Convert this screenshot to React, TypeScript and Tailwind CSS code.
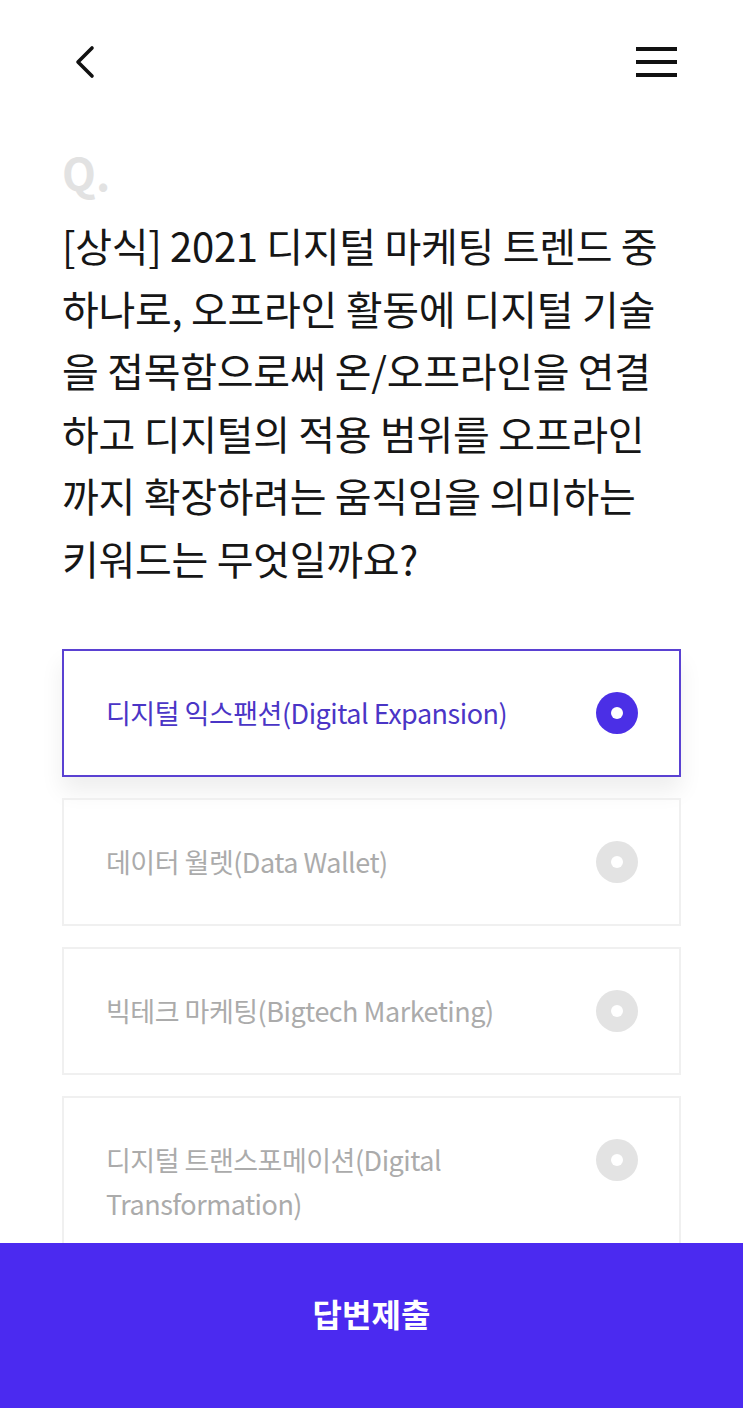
import { useState } from "react";

const font = {
  fontFamily: '"Noto Sans CJK KR", "Noto Sans", sans-serif',
};

const options = [
  { id: 1, label: ["디지털 익스팬션(Digital Expansion)"] },
  { id: 2, label: ["데이터 월렛(Data Wallet)"] },
  { id: 3, label: ["빅테크 마케팅(Bigtech Marketing)"] },
  { id: 4, label: ["디지털 트랜스포메이션(Digital", "Transformation)"] },
];

const question = [
  "[상식] 2021 디지털 마케팅 트렌드 중",
  "하나로, 오프라인 활동에 디지털 기술",
  "을 접목함으로써 온/오프라인을 연결",
  "하고 디지털의 적용 범위를 오프라인",
  "까지 확장하려는 움직임을 의미하는",
  "키워드는 무엇일까요?",
];

function Radio({ on }: { on: boolean }) {
  return (
    <div
      className={`flex h-[42px] w-[42px] shrink-0 items-center justify-center rounded-full ${
        on ? "bg-[#4b2fe6]" : "bg-[#e3e3e3]"
      }`}
    >
      <div className="h-[12px] w-[12px] rounded-full bg-white" />
    </div>
  );
}

export default function App() {
  const [picked, setPicked] = useState(1);

  return (
    <div className="relative h-[1408px] overflow-hidden bg-white" style={font}>
      {/* top bar */}
      <header className="flex h-[64px] items-center justify-between px-[62px] mt-[30px]">
        <svg width="26" height="34" viewBox="0 0 26 34" className="ml-[10px]" fill="none">
          <path d="M20 3 L6 17 L20 31" stroke="#111" strokeWidth="3.6" strokeLinecap="round" strokeLinejoin="round" />
        </svg>
        <div className="mr-[4px] flex w-[41px] flex-col gap-[9.5px]">
          <span className="block h-[3.5px] bg-[#111]" />
          <span className="block h-[3.5px] bg-[#111]" />
          <span className="block h-[3.5px] bg-[#111]" />
        </div>
      </header>

      <main className="px-[62px]">
        <div className="mt-[54px] text-[44px] font-bold leading-[48px] text-[#e2e2e2]">Q.</div>

        <h1 className="mt-[18px] whitespace-nowrap text-[40px] font-normal leading-[62.5px] tracking-[-0.3px] text-[#161616]">
          {question.map((l) => (
            <div key={l}>{l}</div>
          ))}
        </h1>

        <ul className="mt-[60px] flex flex-col gap-[21px]">
          {options.map((o) => {
            const on = picked === o.id;
            return (
              <li
                key={o.id}
                onClick={() => setPicked(o.id)}
                className={`flex items-start justify-between border-2 py-[40px] pl-[42px] pr-[41px] ${
                  on
                    ? "border-[#5a41d2] shadow-[0_14px_22px_rgba(0,0,0,0.07)]"
                    : "border-[#f0f0f0]"
                }`}
              >
                <div
                  className={`text-[27px] leading-[44px] tracking-[-0.5px] ${
                    on ? "text-[#4a35c6]" : "text-[#ababab]"
                  }`}
                >
                  {o.label.map((t) => (
                    <div key={t}>{t}</div>
                  ))}
                </div>
                <div className="mt-[1px]">
                  <Radio on={on} />
                </div>
              </li>
            );
          })}
        </ul>
      </main>

      {/* submit bar */}
      <button className="absolute bottom-0 left-0 right-0 flex h-[165px] items-center justify-center bg-[#4b2af0] pb-[26px] text-[32px] font-bold text-white">
        답변제출
      </button>
    </div>
  );
}
